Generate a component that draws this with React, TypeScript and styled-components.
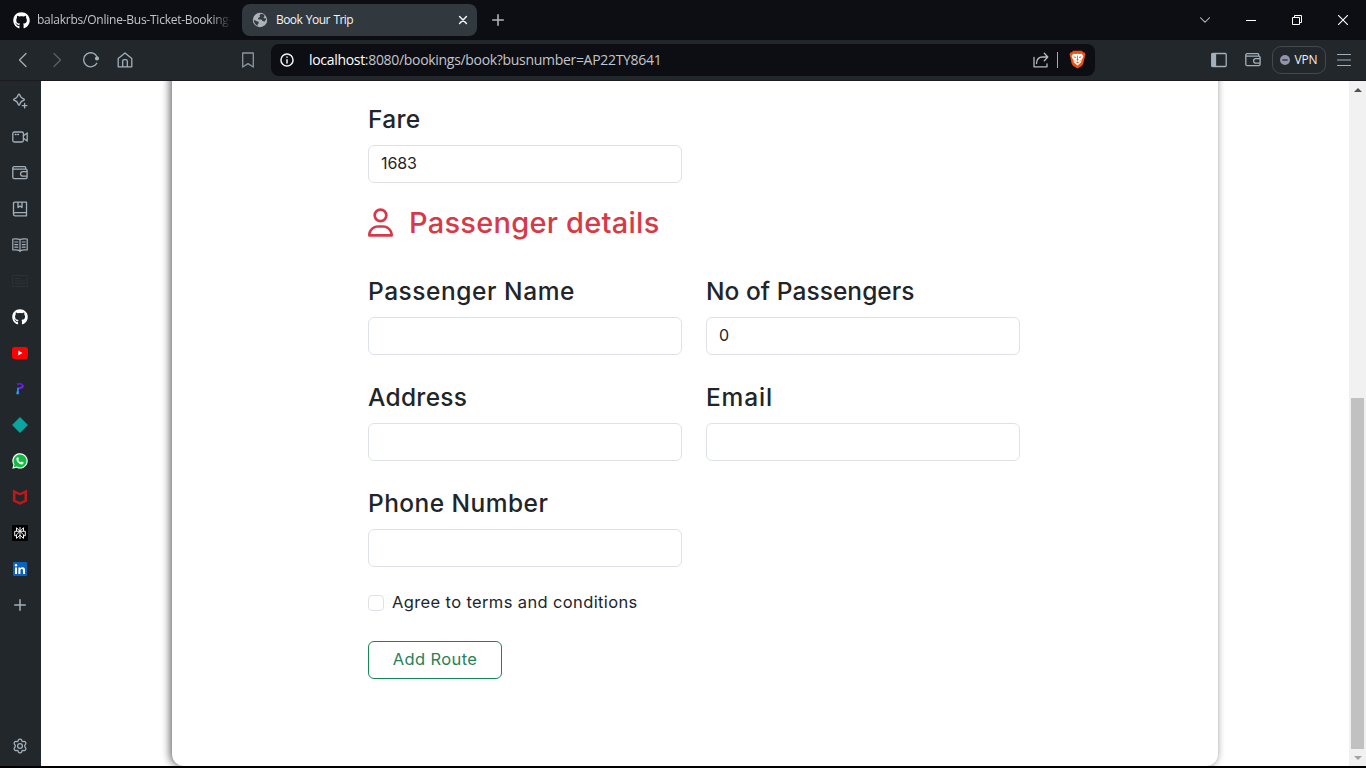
import React from "react";
import styled, { createGlobalStyle } from "styled-components";
import { FaGithub, FaRegUser } from "react-icons/fa6";

const GlobalStyle = createGlobalStyle`
  *, *::before, *::after { box-sizing: border-box; }
  html, body { margin: 0; padding: 0; overflow: hidden; background: #000; }
  svg { display: block; flex: none; }
`;

const Browser = styled.div`
  width: 1366px;
  height: 768px;
  display: flex;
  flex-direction: column;
  background: #000;
  font-family: "Open Sans", "Noto Sans", sans-serif;
`;

/* Title bar */
const TitleBar = styled.header`
  height: 40px;
  flex: none;
  display: flex;
  align-items: center;
  background: #0d0e13;
`;

const Tab = styled.div<{ $active?: boolean }>`
  width: ${(p) => (p.$active ? 235 : 242)}px;
  height: 32px;
  display: flex;
  align-items: center;
  gap: ${(p) => (p.$active ? 8 : 7)}px;
  padding: ${(p) => (p.$active ? "0 9px 0 10px" : "0 8px 0 13px")};
  border-radius: 8px;
  background: ${(p) => (p.$active ? "#31393e" : "transparent")};
  color: ${(p) => (p.$active ? "#f4f5f7" : "#c3c4c9")};
`;

const TabTitle = styled.span<{ $spacing: number; $fade?: boolean }>`
  flex: 1;
  white-space: nowrap;
  font-size: 12px;
  line-height: 18px;
  letter-spacing: ${(p) => p.$spacing}px;
  ${(p) => (p.$fade ? "mask-image: linear-gradient(90deg, #000 88%, transparent 99%);" : "word-spacing: 1px;")}
`;

const NewTab = styled.div`
  padding-left: 14px;
  flex: 1;
`;

const WindowButtons = styled.div`
  display: flex;
`;

const WindowButton = styled.div`
  width: 46px;
  height: 40px;
  display: flex;
  align-items: center;
  justify-content: center;
`;

/* Toolbar */
const Toolbar = styled.div`
  height: 41px;
  flex: none;
  display: flex;
  align-items: center;
  background: #22272b;
  padding: 0 5px 1px 6px;
  border-bottom: 1px solid #1b1a1e;
`;

const ToolButton = styled.div`
  width: 34px;
  height: 32px;
  display: flex;
  align-items: center;
  justify-content: center;
`;

const BookmarkSlot = styled.div`
  margin-left: 89px;
  margin-right: 6px;
`;

const AddressBar = styled.div`
  width: 824px;
  height: 32px;
  display: flex;
  align-items: center;
  padding: 0 9px 0 9px;
  border-radius: 8px;
  background: #0d0e13;
`;

const Url = styled.span`
  flex: 1;
  margin-left: 15px;
  font-size: 14px;
  line-height: 20px;
  letter-spacing: -0.31px;
  color: #c4c5ca;
  white-space: nowrap;
`;

const UrlHost = styled.span`
  color: #fff;
`;

const BarDivider = styled.div`
  width: 1px;
  height: 16px;
  margin: 0 11px 0 8px;
  background: #a9abb0;
`;

const ToolbarEnd = styled.div`
  display: flex;
  align-items: center;
  margin-left: auto;
`;

const VpnButton = styled.div`
  width: 54px;
  height: 28px;
  margin: 0 1px 0 2px;
  display: flex;
  align-items: center;
  justify-content: center;
  gap: 4px;
  border: 1px solid #43484d;
  border-radius: 9px;
  color: #f0f1f4;
  font-size: 12px;
  letter-spacing: -0.1px;
`;

/* Body */
const Body = styled.div`
  height: 685px;
  flex: none;
  display: flex;
`;

const Sidebar = styled.nav`
  width: 41px;
  flex: none;
  display: flex;
  flex-direction: column;
  align-items: flex-start;
  padding: 2px 0;
  background: #22272b;
`;

const SideItem = styled.div<{ $last?: boolean }>`
  width: 40px;
  height: 36px;
  display: flex;
  align-items: center;
  justify-content: center;
  color: #fff;
  ${(p) => p.$last && "margin-top: auto;"}
`;

const Page = styled.main`
  flex: 1;
  overflow: hidden;
  background: #fff;
  padding: 0 131px;
`;

const Card = styled.section`
  height: 705px;
  margin-top: -20px;
  padding: 44px 186px 0 196px;
  background: #fff;
  border-radius: 12px;
  box-shadow: -2px 0 8px 0 rgba(0, 0, 0, 0.6);
  font-family: Inter, "Open Sans", sans-serif;
  color: #212529;
`;

const FieldGrid = styled.div`
  width: 652px;
  display: grid;
  grid-template-columns: 314px 314px;
  column-gap: 24px;
  row-gap: 28px;
`;

const Field = styled.label`
  display: flex;
  flex-direction: column;
`;

const FieldLabel = styled.span<{ $spacing: number }>`
  font-size: 24.5px;
  font-weight: 450;
  line-height: 29px;
  margin-bottom: 11px;
  letter-spacing: ${(p) => p.$spacing}px;
  white-space: nowrap;
`;

const Input = styled.input`
  width: 100%;
  height: 38px;
  padding: 5px 12px 7px;
  border: 1px solid #dee2e6;
  border-radius: 6px;
  background: #fff;
  color: #212529;
  font: 400 16px Inter, "Open Sans", sans-serif;
  letter-spacing: -0.1px;
  outline: none;
`;

const SectionTitle = styled.h2`
  display: flex;
  align-items: center;
  gap: 16px;
  height: 38px;
  margin: 21px 0 35px;
  padding-bottom: 2px;
  font-size: 29px;
  font-weight: 450;
  letter-spacing: 0.25px;
  color: #d63a48;
  white-space: nowrap;
`;

const PassengerIcon = styled(FaRegUser)`
  width: 25px;
  height: 29px;
`;

const Terms = styled.label`
  display: flex;
  align-items: center;
  gap: 8px;
  height: 24px;
  margin-top: 24px;
  font-size: 16.5px;
  font-weight: 400;
  letter-spacing: 0.37px;
  white-space: nowrap;
`;

const TermsText = styled.span`
  padding-bottom: 2px;
`;

const Checkbox = styled.input`
  appearance: none;
  width: 16px;
  height: 16px;
  margin: 0;
  border: 1px solid #dee2e6;
  border-radius: 4px;
  background: #fff;
`;

const SubmitButton = styled.button`
  width: 134px;
  height: 38px;
  margin-top: 26px;
  padding: 0 0 3px;
  border: 1px solid #198754;
  border-radius: 6px;
  background: #fff;
  color: #2a8158;
  font: 400 16.5px Inter, "Open Sans", sans-serif;
  letter-spacing: 0.38px;
`;

const Scrollbar = styled.div`
  width: 17px;
  flex: none;
  display: flex;
  flex-direction: column;
  align-items: center;
  background: #f1f1f1;
`;

const ScrollArrow = styled.div`
  height: 17px;
  display: flex;
  align-items: center;
`;

const ScrollThumb = styled.div`
  width: 13px;
  height: 351px;
  margin-top: auto;
  background: #c1c1c1;
`;

type LineProps = { size?: number; color?: string; width?: number; children: React.ReactNode };

const Line = ({ size = 16, color = "#a3b0ba", width = 1.3, children }: LineProps) => (
  <svg
    width={size}
    height={size}
    viewBox="0 0 16 16"
    fill="none"
    stroke={color}
    strokeWidth={width}
    strokeLinecap="round"
    strokeLinejoin="round"
  >
    {children}
  </svg>
);

const WalletIcon = () => (
  <Line>
    <path d="M.8 3v9.2c0 .9.6 1.5 1.5 1.5h11.4c.8 0 1.4-.6 1.4-1.4V5.600c0-.8-.6-1.400-1.400-1.400H2.200C1.300 4.200.8 3.700.8 3s.5-1.300 1.300-1.300h10.600c.6 0 1 .4 1 1v1.500M15.100 6.700h-4.300a2.200 2.200 0 0 0 0 4.500h4.300" />
  </Line>
);

const GlobeIcon = () => (
  <svg width="16" height="16" viewBox="0 0 16 16">
    <circle cx="8" cy="8" r="7.200" fill="#aeb2b9" />
    <path
      d="M8.800 1.800 7.500 3.400l.6 1.300-2 1.300.2 1.400h3.200l1 1.700 2.100.4 1.300-1.700.3-1.500-1.500.3-1.300-1.100 1.200-1.400-.8-1.500zM1.900 7.700l2.800 1.500 1.800.5.300 1.600-1.100 1v1.500C3.300 12.800 1.900 10.600 1.900 7.700z"
      fill="#343c42"
    />
  </svg>
);

const SparkleIcon = () => (
  <Line>
    <path d="M7 1.200c.5 0 .7.300.8.700.6 2.500 1.400 3.300 3.900 3.900.9.200.9 1.400 0 1.600-2.500.6-3.300 1.400-3.900 3.900-.2.900-1.400.9-1.600 0C5.600 8.800 4.800 8 2.300 7.400c-.9-.2-.9-1.400 0-1.600C4.800 5.200 5.600 4.400 6.200 1.900c.1-.4.3-.7.8-.7z" />
    <path d="M12.600 10.300v4.600M10.300 12.600h4.600" />
  </Line>
);

const CameraIcon = () => (
  <Line>
    <rect x=".8" y="3" width="10.600" height="10" rx="1.500" />
    <path d="M11.400 6.800 15.200 4v8l-3.800-2.800M3.200 5.500h.9M5.800 5.500h.7" />
  </Line>
);

const BookmarksIcon = () => (
  <Line>
    <path d="M1.500 13V2.500c0-.8.500-1.300 1.300-1.300h11.700v13.600H3.200c-1 0-1.700-.7-1.700-1.600s.7-1.500 1.600-1.500h11.200M6 1.300v5.200l2-1.500 2 1.500V1.300" />
  </Line>
);

const ReaderIcon = () => (
  <Line width={1.2}>
    <path d="M8 2.600v12M8 2.600C6.500 1.700 3.500 1.700.8 2v11c2.700-.2 5.700-.2 7.200.9 1.500-1.100 4.500-1.100 7.200-.9V2C12.500 1.700 9.500 1.700 8 2.600zM2.800 5h3M2.800 7.600h3M2.800 10.200h3M10.200 5h3M10.200 7.600h3M10.200 10.200h3" />
  </Line>
);

const NewsIcon = () => (
  <Line color="#2b3135" width={1}>
    <path d="M.8 2.500h14.400v11H.8zM3 5.500h5M3 8h10M3 10.500h10" />
  </Line>
);

const YoutubeIcon = () => (
  <svg width="16" height="12" viewBox="0 0 16 12">
    <rect width="16" height="12" rx="2.800" fill="#f00" />
    <path d="m6.300 3.600 4.100 2.400-4.100 2.400z" fill="#fff" />
  </svg>
);

const SwirlIcon = () => (
  <svg width="16" height="16" viewBox="0 0 16 16" fill="none" strokeWidth="2">
    <path d="M5 3.500c2.500-1.300 5.500-.7 5.600 1.300" stroke="#5a19d2" />
    <path d="M11 4.300c0 2.400-2 3.100-5.200 3.100" stroke="#7e22e8" />
    <path d="M6.500 6.800c-1.400 2-.2 3.200-.3 6.500" stroke="#2c7ff0" />
    <path d="M5.200 10.500v2.800" stroke="#20c4dd" strokeWidth="1.300" />
  </svg>
);

const DiamondIcon = () => (
  <svg width="16" height="16" viewBox="0 0 16 16">
    <path d="M8 .3 15.700 8 8 15.700.3 8z" fill="#0ba5a0" stroke="#0ba5a0" strokeWidth=".5" strokeLinejoin="round" />
  </svg>
);

const WhatsappIcon = () => (
  <svg width="16" height="16" viewBox="0 0 16 16">
    <path d="M.3 15.700 1.400 11.800A7.700 7.700 0 1 1 4.500 14.700z" fill="#fff" />
    <path d="m1.700 14.300.8-2.900a6.500 6.500 0 1 1 2.300 2.200z" fill="#10bd42" />
    <path
      d="M5.500 4.300h.6l.8 1.800-.7 1c.6 1.100 1.500 1.900 2.700 2.400l.9-.9 1.800.9c.1 1.300-.9 2-2 2C7.100 11.200 4.400 8.300 4.400 6c0-.8.500-1.500 1.100-1.700z"
      fill="#fff"
    />
  </svg>
);

const ShieldIcon = () => (
  <svg width="16" height="16" viewBox="0 0 16 16">
    <path d="M.9.500 8 3.900 15.100.500v12L8 15.800.9 12.500zM3.500 4.400v6.500L8 13.100l4.500-2.200V4.400L8 6.600z" fill="#c01818" fillRule="evenodd" />
  </svg>
);

const AsteriskIcon = () => (
  <svg width="16" height="16" viewBox="0 0 16 16" fill="none" stroke="#f3f3f3" strokeWidth="1">
    <rect width="16" height="16" rx="1" fill="#000" stroke="none" />
    <path d="M8 2v12M4.500 2.700 8 6.300l3.500-3.600v3.600h-7zM4.500 6.300H2.700v4.400h1.800M11.500 6.300h1.800v4.400h-1.800M8 6.300l-3.500 3.500v3.600L8 10.200l3.500 3.200V9.800z" />
  </svg>
);

const LinkedinIcon = () => (
  <svg width="14" height="14" viewBox="0 0 14 14">
    <rect width="14" height="14" rx="1" fill="#0b63bd" />
    <path d="M2 5.400h2V12H2zM5.400 5.400h1.900v.9c.5-.7 1.200-1.100 2.100-1.100 1.900 0 2.600 1.200 2.600 3V12h-2V8.700c0-1-.3-1.700-1.200-1.700-1 0-1.400.7-1.400 1.700V12h-2z" fill="#fff" />
    <circle cx="3" cy="3.200" r="1.200" fill="#fff" />
  </svg>
);

const GearIcon = () => (
  <Line>
    <path d="M6.500 1.800c.2-.9 2.800-.9 3 0l.4 1.300 1 .6 1.300-.3c.9-.2 2.200 2 1.500 2.700l-.9 1v1.800l.9 1c.7.7-.6 2.900-1.500 2.700l-1.300-.3-1 .6-.4 1.300c-.2.900-2.800.9-3 0l-.4-1.300-1-.6-1.300.3c-.9.200-2.200-2-1.500-2.700l.9-1V7.100l-.9-1c-.7-.7.600-2.900 1.500-2.700l1.300.3 1-.6z" />
    <circle cx="8" cy="8" r="2.400" />
  </Line>
);

const BraveIcon = () => (
  <svg width="17" height="19" viewBox="0 0 17 19">
    <path d="m4.200.8h8.600l1.400 1.400 1.400.2.900 2.200-.5 1.300-1.800 8.100-1.600 2L8.500 18.600 4.400 16l-1.600-2L1 5.900.5 4.600l.9-2.200 1.400-.2z" fill="#f0500f" />
    <path d="m4.200 3.700 2.300.4 2-.4 2 .4 2.300-.4 1.600 2.200-.4 1.700-1.500 2.600-.3 2-1 1.100-2.700 2.100-2.700-2.100-1-1.100-.3-2L3 7.600l-.4-1.700z" fill="#fff" />
    <path d="m4.500 6.200 2.600.7-.5 1.100-1.500-.5zM12.500 6.200l-2.600.7.500 1.100 1.500-.5zM8.100 5.500h.8v3.400l.8 1-1.200.8-1.200-.8.800-1zM5.300 9.800l1.200 1.300-.5.900zM11.700 9.800l-1.200 1.300.5.900zM7 12.500l1.500-.9 1.500.9-1.500.8z" fill="#f0500f" />
  </svg>
);

export default function App() {
  return (
    <Browser>
      <GlobalStyle />
      <TitleBar>
        <Tab>
          <FaGithub size={17} color="#fff" />
          <TabTitle $spacing={-0.24} $fade>
            balakrbs/Online-Bus-Ticket-Booking-
          </TabTitle>
        </Tab>
        <Tab $active>
          <GlobeIcon />
          <TabTitle $spacing={-0.55}>Book Your Trip</TabTitle>
          <Line size={10} color="#f3f4f6" width={2.4}>
            <path d="m2.500 2.500 11 11M13.500 2.500l-11 11" />
          </Line>
        </Tab>
        <NewTab>
          <Line size={14} color="#b3b5ba" width={1.8}>
            <path d="M8 2v12M2 8h12" />
          </Line>
        </NewTab>
        <WindowButtons>
          <WindowButton>
            <Line size={12} color="#d0d1d4" width={1.4}>
              <path d="m2 5 6 6 6-6" />
            </Line>
          </WindowButton>
          <WindowButton>
            <svg width="10" height="10" viewBox="0 0 10 10">
              <path d="M0 5.500h10" stroke="#fff" />
            </svg>
          </WindowButton>
          <WindowButton>
            <svg width="10" height="10" viewBox="0 0 10 10" fill="none" stroke="#fff">
              <path d="M.5 2.500h7v7h-7zM2.500 2.500v-2h7v7h-2" />
            </svg>
          </WindowButton>
          <WindowButton>
            <svg width="10" height="10" viewBox="0 0 10 10" stroke="#fff" strokeWidth="1.100">
              <path d="m0 0 10 10M10 0 0 10" />
            </svg>
          </WindowButton>
        </WindowButtons>
      </TitleBar>

      <Toolbar>
        <ToolButton>
          <Line>
            <path d="M11 1.500 4.500 8l6.500 6.500" />
          </Line>
        </ToolButton>
        <ToolButton>
          <Line color="#596167">
            <path d="M5 1.500 11.500 8 5 14.500" />
          </Line>
        </ToolButton>
        <ToolButton>
          <Line>
            <path d="M13.700 11.300A7 7 0 1 1 14 4.800" />
            <circle cx="14" cy="6.500" r="1.400" fill="#a3b0ba" />
          </Line>
        </ToolButton>
        <ToolButton>
          <Line>
            <path d="M1.200 6.500 8 1l6.800 5.500v8.300H1.200zM5.700 14.500V9.200c0-1 .6-1.600 1.500-1.600h1.600c.9 0 1.500.6 1.500 1.600v5.300" />
          </Line>
        </ToolButton>
        <BookmarkSlot>
          <ToolButton>
            <Line color="#8d979f">
              <path d="M2.700 1h10.600v14L8 11.600 2.700 15z" />
            </Line>
          </ToolButton>
        </BookmarkSlot>
        <AddressBar>
          <Line size={14} color="#f3f4f6" width={1.7}>
            <circle cx="8" cy="8" r="6.900" />
            <path d="M8 7.600v3.800M8 4.700v.1" />
          </Line>
          <Url>
            <UrlHost>localhost</UrlHost>:8080/bookings/book?busnumber=AP22TY8641
          </Url>
          <Line color="#b5b8be">
            <path d="M1 5.500v9.300h13v-3M3.500 11.500c.2-4 2.500-6.500 6-6.500h4.800M11.300 1.300 14.800 5l-3.500 3.700" />
          </Line>
          <BarDivider />
          <BraveIcon />
        </AddressBar>
        <ToolbarEnd>
          <ToolButton>
            <Line>
              <rect x=".8" y="1.500" width="14.400" height="13" rx="1" />
              <path d="M1 2h3.500v12H1z" fill="#a3b0ba" />
            </Line>
          </ToolButton>
          <ToolButton>
            <WalletIcon />
          </ToolButton>
          <VpnButton>
            <svg width="10" height="10" viewBox="0 0 10 10">
              <circle cx="5" cy="5" r="5" fill="#9295a9" />
              <path d="M2.300 5h5.400" stroke="#30333f" strokeWidth="1.400" />
            </svg>
            VPN
          </VpnButton>
          <ToolButton>
            <Line width={1.1}>
              <path d="M1.500 2.500h13M1.500 8h13M1.500 13.500h13" />
            </Line>
          </ToolButton>
        </ToolbarEnd>
      </Toolbar>

      <Body>
        <Sidebar>
          <SideItem><SparkleIcon /></SideItem>
          <SideItem><CameraIcon /></SideItem>
          <SideItem><WalletIcon /></SideItem>
          <SideItem><BookmarksIcon /></SideItem>
          <SideItem><ReaderIcon /></SideItem>
          <SideItem><NewsIcon /></SideItem>
          <SideItem><FaGithub size={16} /></SideItem>
          <SideItem><YoutubeIcon /></SideItem>
          <SideItem><SwirlIcon /></SideItem>
          <SideItem><DiamondIcon /></SideItem>
          <SideItem><WhatsappIcon /></SideItem>
          <SideItem><ShieldIcon /></SideItem>
          <SideItem><AsteriskIcon /></SideItem>
          <SideItem><LinkedinIcon /></SideItem>
          <SideItem>
            <Line size={12} width={2}>
              <path d="M8 1v14M1 8h14" />
            </Line>
          </SideItem>
          <SideItem $last><GearIcon /></SideItem>
        </Sidebar>

        <Page>
          <Card>
            <FieldGrid>
              <Field>
                <FieldLabel $spacing={0.3}>Fare</FieldLabel>
                <Input defaultValue="1683" />
              </Field>
            </FieldGrid>
            <SectionTitle>
              <PassengerIcon />
              Passenger details
            </SectionTitle>
            <FieldGrid>
              <Field>
                <FieldLabel $spacing={0.55}>Passenger Name</FieldLabel>
                <Input />
              </Field>
              <Field>
                <FieldLabel $spacing={0.05}>No of Passengers</FieldLabel>
                <Input defaultValue="0" />
              </Field>
              <Field>
                <FieldLabel $spacing={0.3}>Address</FieldLabel>
                <Input />
              </Field>
              <Field>
                <FieldLabel $spacing={0.85}>Email</FieldLabel>
                <Input />
              </Field>
              <Field>
                <FieldLabel $spacing={0.45}>Phone Number</FieldLabel>
                <Input />
              </Field>
            </FieldGrid>
            <Terms>
              <Checkbox type="checkbox" />
              <TermsText>Agree to terms and conditions</TermsText>
            </Terms>
            <SubmitButton>Add Route</SubmitButton>
          </Card>
        </Page>

        <Scrollbar>
          <ScrollArrow>
            <svg width="8" height="4" viewBox="0 0 8 4">
              <path d="M0 4 4 0l4 4z" fill="#505050" />
            </svg>
          </ScrollArrow>
          <ScrollThumb />
          <ScrollArrow>
            <svg width="8" height="4" viewBox="0 0 8 4">
              <path d="m0 0 4 4 4-4z" fill="#a3a3a3" />
            </svg>
          </ScrollArrow>
        </Scrollbar>
      </Body>
    </Browser>
  );
}
